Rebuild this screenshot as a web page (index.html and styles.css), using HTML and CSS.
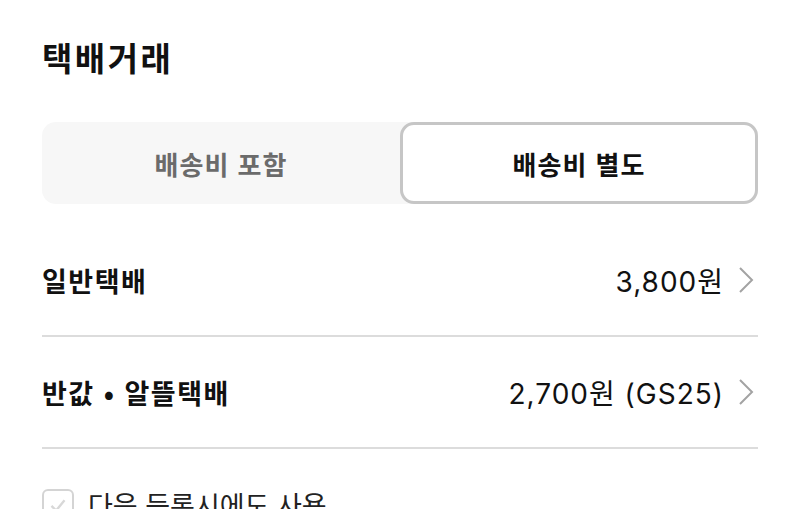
FILE: index.html
```html
<!DOCTYPE html>
<html lang="ko">
<head>
<meta charset="utf-8">
<link rel="stylesheet" href="styles.css">
</head>
<body>
<main class="page">
  <h1 class="title">택배거래</h1>
  <div class="segmented">
    <div class="seg">배송비 포함</div>
    <div class="seg seg-active">배송비 별도</div>
  </div>
  <ul class="list">
    <li class="row">
      <span class="row-label">일반택배</span>
      <span class="row-value">3,800원
        <svg class="chev" viewBox="0 0 16 28" width="16" height="28"><polyline points="2,2 14,14 2,26" fill="none" stroke="#a3a3a3" stroke-width="2"/></svg>
      </span>
    </li>
    <li class="row">
      <span class="row-label">반값 • 알뜰택배</span>
      <span class="row-value">2,700원 (GS25)
        <svg class="chev" viewBox="0 0 16 28" width="16" height="28"><polyline points="2,2 14,14 2,26" fill="none" stroke="#a3a3a3" stroke-width="2"/></svg>
      </span>
    </li>
  </ul>
  <label class="check">
    <span class="box">
      <svg viewBox="0 0 30 30" width="30" height="30"><polyline points="8,16 13,21 22,10" fill="none" stroke="#d8d8d8" stroke-width="2.5"/></svg>
    </span>
    <span class="check-text">다음 등록시에도 사용</span>
  </label>
</main>
</body>
</html>
```
FILE: styles.css
```css
html, body {
  margin: 0;
  padding: 0;
  background: #fff;
}
body {
  font-family: "Noto Sans CJK KR", "Noto Sans", sans-serif;
  color: #111;
  overflow: hidden;
}
.page {
  padding: 33px 42px 0 42px;
}
.title {
  margin: 0;
  font-size: 33px;
  line-height: 48px;
  font-weight: 700;
  letter-spacing: 2.5px;
}
.segmented {
  margin-top: 41px;
  height: 82px;
  display: grid;
  grid-template-columns: 1fr 1fr;
  background: #f7f7f7;
  border-radius: 14px;
}
.seg {
  display: flex;
  align-items: center;
  justify-content: center;
  font-size: 26px;
  font-weight: 700;
  color: #6b6b6b;
  letter-spacing: 1px;
}
.seg-active {
  background: #fff;
  color: #111;
  border: 3px solid #c6c6c6;
  border-radius: 14px;
}
.list {
  list-style: none;
  margin: 21px 0 0 0;
  padding: 0;
}
.row {
  height: 110px;
  display: flex;
  align-items: center;
  justify-content: space-between;
  border-bottom: 2px solid #dcdcdc;
}
.row-label {
  font-size: 27px;
  font-weight: 700;
  letter-spacing: 1.5px;
}
.row-value {
  display: flex;
  align-items: center;
  gap: 14px;
  font-family: "Inter", "Noto Sans CJK KR", sans-serif;
  font-size: 28px;
  font-weight: 400;
  letter-spacing: 1px;
}
.chev {
  display: block;
  margin-right: 4px;
}
.check {
  margin-top: 40px;
  display: flex;
  align-items: flex-start;
  gap: 14px;
}
.box {
  width: 28px;
  height: 28px;
  border: 2px solid #d4d4d4;
  border-radius: 6px;
  display: flex;
  align-items: center;
  justify-content: center;
  flex: none;
}
.box svg {
  width: 28px;
  height: 28px;
}
.check-text {
  font-size: 27px;
  line-height: 36px;
  color: #222;
  margin-top: -2px;
}
```
